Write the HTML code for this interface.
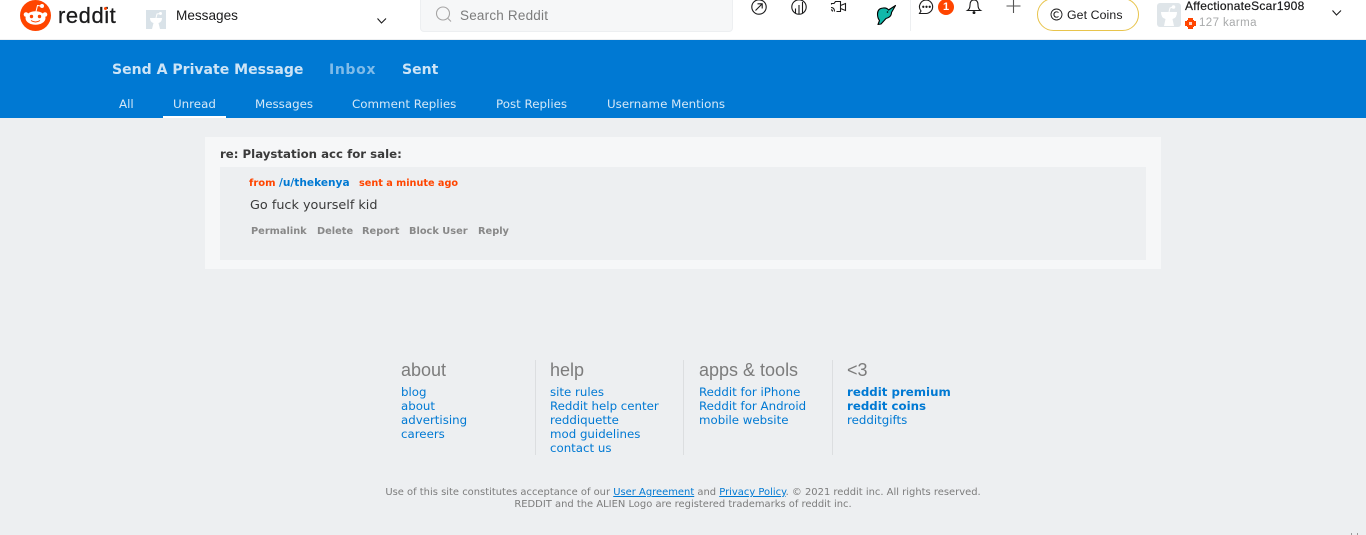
<!DOCTYPE html>
<html><head><meta charset="utf-8"><style>
html,body{margin:0;padding:0;width:1366px;height:535px;overflow:hidden;background:#edeff1}
body{position:relative;font-family:"DejaVu Sans",sans-serif}
.a{position:absolute;white-space:nowrap}
.h{font-family:"Liberation Sans",sans-serif}
.f{font-size:11.8px;line-height:14px;color:#0079d3}
.t{font-family:"Liberation Sans",sans-serif;font-size:18px;line-height:20px;color:#7c7c7c;top:360px}
.n{font-size:11.85px;line-height:14px;top:97px;color:#d5e8f7}
.act{font-size:9.8px;font-weight:bold;color:#888;top:225px;line-height:13px}
.v{position:absolute;width:1px;background:#dcdee0;top:360px;height:95px}
svg{position:absolute;overflow:visible}
</style></head><body>
<div class="a" style="left:0;top:0;width:1366px;height:40px;background:#fff"></div>
<svg style="left:20px;top:0" width="32" height="32" viewBox="0 0 32 32">
<circle cx="15.5" cy="15.5" r="15.5" fill="#ff4500"/>
<ellipse cx="15.5" cy="18" rx="10" ry="6.8" fill="#fff"/>
<circle cx="6" cy="14.5" r="2.3" fill="#fff"/><circle cx="25" cy="14.5" r="2.3" fill="#fff"/>
<circle cx="22" cy="6" r="2" fill="#fff"/><path d="M16 11.500L17.500 5.500L22 6.300" stroke="#fff" fill="none"/>
<circle cx="11.500" cy="16.500" r="1.700" fill="#ff4500"/><circle cx="19.500" cy="16.500" r="1.700" fill="#ff4500"/>
<path d="M11 20.500Q15.500 23.500 20 20.500" stroke="#ff4500" fill="none"/>
</svg>
<div class="a h" style="left:58px;top:3px;font-size:22px;line-height:26px;color:#1a1a1b;letter-spacing:.55px;-webkit-text-stroke:.25px #1a1a1b">reddit</div>
<div class="a" style="left:104px;top:7px;width:3px;height:3px;border-radius:50%;background:#ff4500"></div>

<div class="a" style="left:146px;top:10px;width:20px;height:19px;background:#d9e2e8"></div>
<svg style="left:146px;top:10px" width="20" height="19"><path d="M4 8H16Q16 12 12.500 13L14 19H6L7.500 13Q4 12 4 8Z" fill="#fff"/><path d="M10 8L11 4L14 3.500" stroke="#fff" fill="none"/><circle cx="14.500" cy="3.500" r="1.500" fill="#fff"/></svg>
<div class="a h" style="left:176px;top:8px;font-size:13.6px;line-height:16px;color:#1a1a1b">Messages</div>
<svg style="left:376px;top:17px" width="12" height="8"><path d="M1.500 1.500L5.500 6L10 1.500" stroke="#1a1a1b" stroke-width="1.100" fill="none"/></svg>

<div class="a" style="left:420px;top:-4px;width:311px;height:34px;background:#f6f7f8;border:1px solid #edeff1;border-radius:4px"></div>
<svg style="left:435px;top:6px" width="18" height="17"><circle cx="8" cy="7.500" r="6.500" stroke="#a5a4a4" stroke-width="1.100" fill="none"/><path d="M13 12.500L16 15.500" stroke="#a5a4a4" stroke-width="1.100"/></svg>
<div class="a h" style="left:460px;top:8px;font-size:13.500px;line-height:16px;color:#7c7c7c;letter-spacing:.2px">Search Reddit</div>

<svg style="left:751px;top:-1px" width="16" height="16" fill="none" stroke="#1a1a1b" stroke-width="1.100"><circle cx="8" cy="8" r="7.200"/><path d="M4.500 11.500L11 5M6.500 4.800H11.200V9.500"/></svg>
<svg style="left:791px;top:-1px" width="16" height="16" fill="none" stroke="#1a1a1b" stroke-width="1.100"><circle cx="8" cy="8" r="7.200"/><path d="M4.500 14V9.500M8 15V6M11.500 14V3"/></svg>
<svg style="left:830px;top:0" width="17" height="14" fill="none" stroke="#1a1a1b" stroke-width="1.100"><path d="M1.500 4.500V3.500H4L5.500 1.500H10.500V11.500H6.500M10.500 5.500L15.500 3.500V10.500L10.500 8.500"/><path d="M1 7.500Q4.500 7.500 4.500 11.500M1 9.800Q2.500 9.800 2.500 11.500"/></svg>
<svg style="left:876px;top:4px" width="20" height="21" viewBox="0 0 20 21"><path d="M1.500 10Q1.500 4.500 7 4Q11 3.500 12.500 6L19.500 1.500L15.500 8.500Q15.500 13 10 14.500L5 20L2 20.500L3.500 16.500Q1.500 14 1.500 10Z" fill="#12b8aa" stroke="#000" stroke-width="1.100" stroke-linejoin="round"/><circle cx="11.500" cy="8" r=".8" fill="#000"/></svg>
<div class="a" style="left:910px;top:0;width:1px;height:31px;background:#edeff1"></div>
<svg style="left:918px;top:-1px" width="17" height="16" fill="none" stroke="#1a1a1b" stroke-width="1.100"><path d="M8.500 1A7 6.800 0 0 1 8.500 14.500H1.500L3 12A7 6.800 0 0 1 8.500 1Z"/><circle cx="5.300" cy="7.800" r=".6" fill="#1a1a1b"/><circle cx="8.500" cy="7.800" r=".6" fill="#1a1a1b"/><circle cx="11.700" cy="7.800" r=".6" fill="#1a1a1b"/></svg>
<div class="a h" style="left:938px;top:-1px;width:16px;height:16px;border-radius:50%;background:#ff4500;color:#fff;font-size:11px;font-weight:bold;line-height:16px;text-align:center">1</div>
<svg style="left:966px;top:-1px" width="16" height="15" fill="none" stroke="#1a1a1b" stroke-width="1.100"><path d="M1.500 11.500Q4 10 4 6Q4 1 8 1Q12 1 12 6Q12 10 14.500 11.500Z"/><circle cx="8" cy="13.600" r=".9" fill="#1a1a1b"/></svg>
<svg style="left:1006px;top:-1px" width="15" height="15"><path d="M7.500 0V14M.5 7H14.500" stroke="#555" stroke-width="1.100"/></svg>

<div class="a" style="left:1037px;top:-2px;width:100px;height:31px;border:1px solid #e8c44c;border-radius:17px;background:#fff"></div>
<svg style="left:1050px;top:8px" width="13" height="13" fill="none" stroke="#1a1a1b" stroke-width=".9"><circle cx="6.500" cy="6.500" r="5.500"/><path d="M8.500 4.600A2.700 2.700 0 1 0 8.500 8.400"/><path d="M6 3.800A2.800 2.800 0 0 0 6 9.200"/></svg>
<div class="a h" style="left:1067px;top:7px;font-size:12.300px;line-height:16px;color:#1a1a1b;letter-spacing:.1px">Get Coins</div>

<div class="a" style="left:1157px;top:3px;width:24px;height:24px;background:#dfe5e9;border-radius:3px"></div>
<svg style="left:1157px;top:3px" width="24" height="24"><path d="M4 9H20Q20 15 15.500 16L17 23H7L8.500 16Q4 15 4 9Z" fill="#fff"/><path d="M12 9L13 5L16 4" stroke="#fff" fill="none"/><circle cx="16.500" cy="4" r="1.800" fill="#fff"/></svg>
<div class="a h" style="left:1185px;top:-1px;font-size:12px;line-height:14px;color:#1a1a1b;letter-spacing:.25px;-webkit-text-stroke:.2px #1a1a1b">AffectionateScar1908</div>
<svg style="left:1185px;top:18px" width="11" height="11"><path d="M3 0H8V2H9V3H11V8H9V9H8V11H3V9H2V8H0V3H2V2H3Z" fill="#ff4500"/><rect x="4" y="4" width="3" height="3" fill="#ffd6c7"/></svg>
<div class="a h" style="left:1199px;top:16px;font-size:11.500px;line-height:14px;color:#a8aaab;letter-spacing:.4px">127 karma</div>
<svg style="left:1331px;top:9px" width="12" height="8"><path d="M1.500 1.500L5.500 6L10 1.500" stroke="#1a1a1b" stroke-width="1.100" fill="none"/></svg>
<div class="a" style="left:0;top:39px;width:1366px;height:1px;background:#edeff1"></div>

<div class="a" style="left:0;top:40px;width:1366px;height:78px;background:#0079d3"></div>
<div class="a" style="left:112px;top:61px;font-size:14.050px;line-height:18px;font-weight:bold;color:#cde4f6">Send A Private Message</div>
<div class="a" style="left:329px;top:61px;font-size:14.050px;line-height:18px;font-weight:bold;color:#80bce9;letter-spacing:.6px">Inbox</div>
<div class="a" style="left:402px;top:61px;font-size:14.050px;line-height:18px;font-weight:bold;color:#cde4f6">Sent</div>
<div class="a n" style="left:119px">All</div>
<div class="a n" style="left:173px">Unread</div>
<div class="a" style="left:163px;top:116px;width:63px;height:2px;background:#fff"></div>
<div class="a n" style="left:255px">Messages</div>
<div class="a n" style="left:352px">Comment Replies</div>
<div class="a n" style="left:496px">Post Replies</div>
<div class="a n" style="left:607px">Username Mentions</div>

<div class="a" style="left:205px;top:137px;width:956px;height:132px;background:#f6f7f8"></div>
<div class="a" style="left:220px;top:167px;width:926px;height:93px;background:#edeff1"></div>
<div class="a" style="left:220px;top:147px;font-size:11.750px;line-height:14px;font-weight:bold;color:#3a3a3a">re: Playstation acc for sale:</div>
<div class="a" style="left:249px;top:177px;font-size:10px;line-height:13px;font-weight:bold;color:#ff4500">from</div>
<div class="a" style="left:279px;top:177px;font-size:10.600px;line-height:13px;font-weight:bold;color:#0079d3">/u/thekenya</div>
<div class="a" style="left:359px;top:177px;font-size:9.700px;line-height:13px;font-weight:bold;color:#ff4500">sent a minute ago</div>
<div class="a" style="left:250px;top:198px;font-size:12.800px;line-height:15px;color:#3a3a3a">Go fuck yourself kid</div>
<div class="a act" style="left:251px">Permalink</div>
<div class="a act" style="left:317px">Delete</div>
<div class="a act" style="left:362px">Report</div>
<div class="a act" style="left:409px">Block User</div>
<div class="a act" style="left:478px">Reply</div>

<div class="a t" style="left:401px">about</div>
<div class="a f" style="left:401px;top:385px">blog<br>about<br>advertising<br>careers</div>
<div class="v" style="left:535px"></div>
<div class="a t" style="left:550px">help</div>
<div class="a f" style="left:550px;top:385px">site rules<br>Reddit help center<br>reddiquette<br>mod guidelines<br>contact us</div>
<div class="v" style="left:683px"></div>
<div class="a t" style="left:699px">apps &amp; tools</div>
<div class="a f" style="left:699px;top:385px">Reddit for iPhone<br>Reddit for Android<br>mobile website</div>
<div class="v" style="left:832px"></div>
<div class="a t" style="left:847px">&lt;3</div>
<div class="a f" style="left:847px;top:385px"><b>reddit premium</b><br><b>reddit coins</b><br>redditgifts</div>

<div class="a" style="left:0;top:487px;width:1366px;text-align:center;font-size:9.950px;line-height:12px;color:#7c7c7c">Use of this site constitutes acceptance of our <u style="color:#0079d3">User Agreement</u> and <u style="color:#0079d3">Privacy Policy</u>. © 2021 reddit inc. All rights reserved.<br>REDDIT and the ALIEN Logo are registered trademarks of reddit inc.</div>
<div class="a" style="left:1351px;top:533px;width:5px;height:2px;border-left:1px solid #999;border-right:1px solid #999"></div>
</body></html>
